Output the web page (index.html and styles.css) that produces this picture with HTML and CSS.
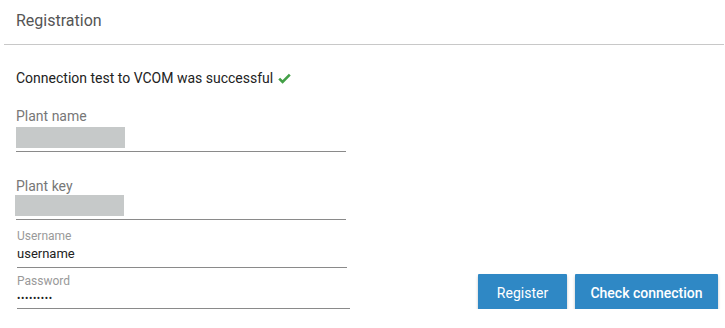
FILE: index.html
```html
<!DOCTYPE html>
<html>
<head>
<meta charset="utf-8">
<link rel="stylesheet" href="styles.css">
</head>
<body>
<div class="header"><span class="title">Registration</span></div>
<div class="content">
  <p class="message">Connection test to VCOM was successful <svg class="check" width="13" height="11" viewBox="0 0 13 11"><path d="M1.2 5.6 L4.6 9 L11.8 1.6" fill="none" stroke="#43a047" stroke-width="2.6" stroke-linejoin="miter"/></svg></p>
  <div class="row">
    <div class="form">
      <div class="field f1">
        <div class="label">Plant name</div>
        <div class="masked"></div>
      </div>
      <div class="field f2">
        <div class="label">Plant key</div>
        <div class="masked"></div>
      </div>
      <div class="field f3">
        <div class="small-label">Username</div>
        <div class="value">username</div>
      </div>
      <div class="field f4">
        <div class="small-label">Password</div>
        <div class="value dots">•••••••••</div>
      </div>
    </div>
    <div class="actions">
      <button class="btn btn-register">Register</button>
      <button class="btn btn-check">Check connection</button>
    </div>
  </div>
</div>
</body>
</html>
```
FILE: styles.css
```css
html, body {
  margin: 0;
  padding: 0;
  background: #fff;
  font-family: Roboto, "Liberation Sans", Arial, sans-serif;
}
.header {
  margin: 0 1px 0 4px;
  padding-left: 12px;
  height: 44px;
  border-bottom: 1px solid #c8c8c8;
  display: flex;
  align-items: center;
  box-sizing: content-box;
}
.title {
  font-size: 16px;
  color: #555;
  line-height: 19px;
  margin-top: -4px;
}
.content {
  padding-left: 16px;
}
.message {
  margin: 25px 0 0 0;
  font-size: 14px;
  line-height: 16px;
  color: #222;
}
.check {
  vertical-align: -1px;
  margin-left: 1px;
}
.row {
  display: flex;
  align-items: flex-end;
}
.form {
  width: 334px;
}
.field {
  border-bottom: 1px solid #8a8a8a;
}
.label {
  font-size: 14px;
  line-height: 16px;
  color: #777;
}
.masked {
  width: 109px;
  height: 21px;
  background: #c6c9c9;
}
.f1 {
  margin-top: 22px;
  width: 330px;
  padding-bottom: 3px;
}
.f1 .masked { margin-top: 3px; }
.f2 {
  margin-top: 26px;
  width: 330px;
  padding-bottom: 3px;
}
.f2 .masked { margin-top: 1px; width: 109px; margin-left: -1px; }
.small-label {
  font-size: 12px;
  line-height: 14px;
  color: #999;
}
.value {
  font-size: 13px;
  line-height: 16px;
  color: #222;
}
.f3 {
  margin-top: 9px;
  margin-left: 1px;
  width: 330px;
  padding-bottom: 5px;
}
.f3 .value { margin-top: 3px; }
.f4 {
  margin-top: 6px;
  margin-left: 1px;
  width: 333px;
  padding-bottom: 1px;
}
.f4 .value { margin-top: 3px; }
.dots {
  font-size: 10px;
  letter-spacing: 0.6px;
  line-height: 16px;
}
.actions {
  margin-left: auto;
  margin-right: 7px;
  margin-bottom: -2px;
  display: flex;
  gap: 8px;
}
.btn {
  border: none;
  background: #2f88c5;
  color: #fff;
  font-family: Roboto, "Liberation Sans", Arial, sans-serif;
  font-size: 14px;
  height: 37px;
  border-radius: 1px;
  box-shadow: 0 2px 3px rgba(0, 0, 0, 0.25);
  padding: 0;
}
.btn-register {
  width: 89px;
}
.btn-check {
  width: 143px;
  font-weight: 500;
}
```
